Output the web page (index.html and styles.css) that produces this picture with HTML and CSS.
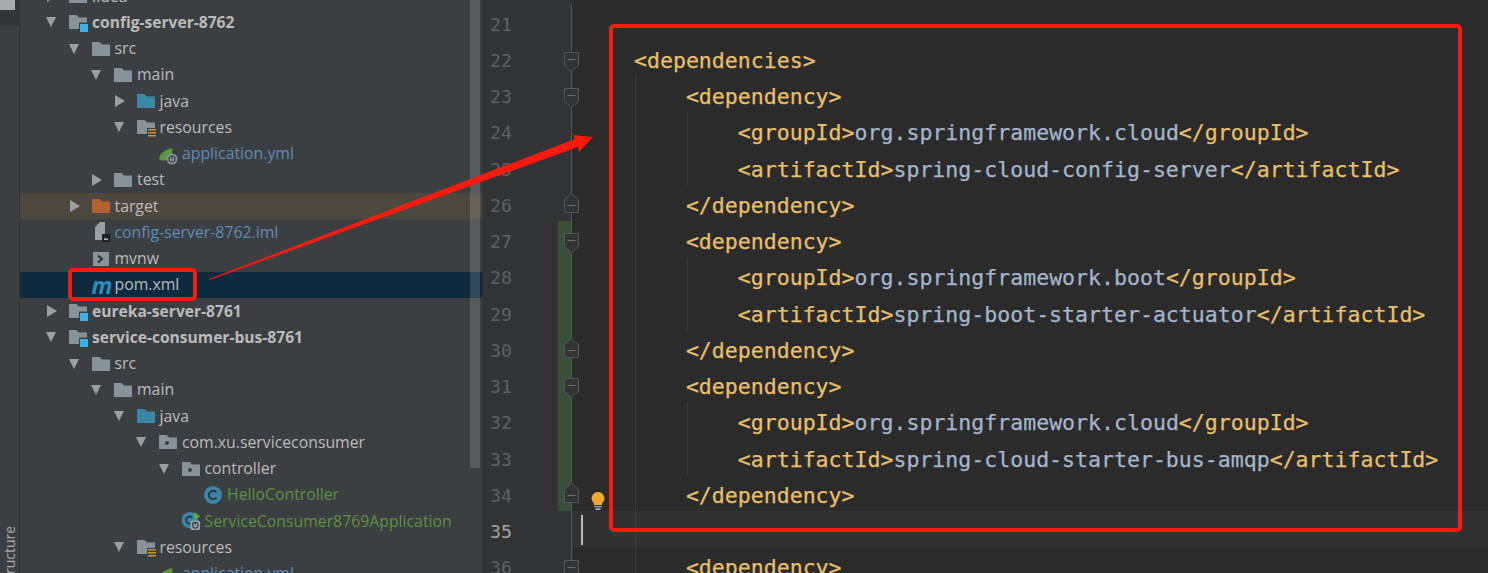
FILE: index.html
```html
<!DOCTYPE html>
<html lang="en">
<head>
<meta charset="utf-8">
<title>pom.xml</title>
<link rel="stylesheet" href="styles.css">
</head>
<body>
<svg class="defs" width="0" height="0" aria-hidden="true">
  <defs>
    <symbol id="folder" viewBox="0 0 18 14"><path d="M0 0h7.5l2.5 2.5h8V14H0z" fill="currentColor"/></symbol>
    <symbol id="module" viewBox="0 0 19 18"><path d="M0 0h7.5l2.5 2.5h8V14H0z" fill="#87939a"/><path d="M10 7.5h9V18h-9z" fill="#3c3f41"/><rect x="11" y="9" width="8" height="8" fill="#3bb0e4"/></symbol>
    <symbol id="res" viewBox="0 0 19 18"><path d="M0 0h7.5l2.5 2.5h8V14H0z" fill="#87939a"/><path d="M10 8h9v10h-9z" fill="#3c3f41"/><path d="M11 9h8v1.6h-8zM11 12h8v1.6h-8zM11 15h8v1.6h-8z" fill="#c9933c"/></symbol>
    <symbol id="pkg" viewBox="0 0 18 14"><path d="M0 0h7.5l2.5 2.5h8V14H0z" fill="#87939a"/><circle cx="8" cy="8" r="2" fill="#3c3f41"/></symbol>
    <symbol id="spring" viewBox="0 0 19 18"><path d="M0 12C1 5 7 3 13 1c1 4 0 8-3 11-4 2-8 2-10 0z" fill="#5b9a3c"/><circle cx="13" cy="12" r="5.5" fill="#87939a"/><circle cx="13" cy="12" r="3" fill="none" stroke="#3c3f41" stroke-width="1.2"/><path d="M13 9.5v2.5" stroke="#3c3f41" stroke-width="1.2"/></symbol>
    <symbol id="iml" viewBox="0 0 19 20"><path d="M3 5l5-5h5v18H3z" fill="#9aa1a6"/><rect x="10" y="12" width="8" height="8" fill="#1d1f20"/><rect x="12" y="16.5" width="4" height="1.4" fill="#c8c8c8"/></symbol>
    <symbol id="term" viewBox="0 0 16 14"><rect width="16" height="14" fill="#87939a"/><path d="M5 3.5L9 7l-4 3.5" fill="none" stroke="#2f3234" stroke-width="2"/></symbol>
    <symbol id="cls" viewBox="0 0 18 18"><circle cx="9" cy="9" r="9" fill="#3d86a8"/><path d="M12.5 6.5A4.2 4.2 0 1 0 12.5 11.5" fill="none" stroke="#2b3a42" stroke-width="2"/></symbol>
    <symbol id="app" viewBox="0 0 20 19"><circle cx="8" cy="8.500" r="8.500" fill="#3d86a8"/><path d="M11 6A3.800 3.800 0 1 0 11 11" fill="none" stroke="#2b3a42" stroke-width="2"/><path d="M13 0l6 4.500-6 4.500z" fill="#5fae3a"/><rect x="9" y="9" width="10" height="10" rx="2" fill="#9aa5ad"/><circle cx="14" cy="14" r="3" fill="none" stroke="#3c3f41" stroke-width="1.200"/><path d="M14 11.500V14" stroke="#3c3f41" stroke-width="1.200"/></symbol>
    <symbol id="fold-down" viewBox="0 0 15 20"><path d="M.5.500h14v13l-7 6-7-6z" fill="#313335" stroke="#55585a"/><path d="M3.500 7.500h8" stroke="#6a6d70"/></symbol>
    <symbol id="fold-up" viewBox="0 0 15 20"><path d="M.5 19.500h14v-13l-7-6-7 6z" fill="#313335" stroke="#55585a"/><path d="M3.500 12.500h8" stroke="#6a6d70"/></symbol>
    <symbol id="bulb" viewBox="0 0 14 18"><path d="M7 0a6.500 6.500 0 0 1 4 11.500V13H3v-1.500A6.500 6.500 0 0 1 7 0z" fill="#f0a732"/><path d="M3 14h8v1.300H3zM4.500 16.300h5V18h-5z" fill="#a8a8a8"/></symbol>
  </defs>
</svg>

<main class="app">
  <aside class="stripe">
    <div class="stripe-btn"><span class="stripe-file"></span></div>
    <span class="stripe-label">7: Structure</span>
  </aside>

  <section class="tree">
    <div class="tree-rows">
      <div class="row d1"><i class="tw closed"></i><svg class="ic gray"><use href="#folder"/></svg><span>.idea</span></div>
      <div class="row d1 bold"><i class="tw open"></i><svg class="ic low"><use href="#module"/></svg><span>config-server-8762</span></div>
      <div class="row d2"><i class="tw open"></i><svg class="ic gray"><use href="#folder"/></svg><span>src</span></div>
      <div class="row d3"><i class="tw open"></i><svg class="ic gray"><use href="#folder"/></svg><span>main</span></div>
      <div class="row d4"><i class="tw closed"></i><svg class="ic blue"><use href="#folder"/></svg><span>java</span></div>
      <div class="row d4"><i class="tw open"></i><svg class="ic low"><use href="#res"/></svg><span>resources</span></div>
      <div class="row d5 t-blue"><i class="tw"></i><svg class="ic low"><use href="#spring"/></svg><span>application.yml</span></div>
      <div class="row d3"><i class="tw closed"></i><svg class="ic gray"><use href="#folder"/></svg><span>test</span></div>
      <div class="row d2 excluded"><i class="tw closed"></i><svg class="ic orange"><use href="#folder"/></svg><span>target</span></div>
      <div class="row d2 t-blue"><i class="tw"></i><svg class="ic tall"><use href="#iml"/></svg><span>config-server-8762.iml</span></div>
      <div class="row d2"><i class="tw"></i><svg class="ic"><use href="#term"/></svg><span>mvnw</span></div>
      <div class="row d2 selected"><i class="tw"></i><span class="mvn">m</span><span>pom.xml</span></div>
      <div class="row d1 bold"><i class="tw closed"></i><svg class="ic low"><use href="#module"/></svg><span>eureka-server-8761</span></div>
      <div class="row d1 bold"><i class="tw open"></i><svg class="ic low"><use href="#module"/></svg><span>service-consumer-bus-8761</span></div>
      <div class="row d2"><i class="tw open"></i><svg class="ic gray"><use href="#folder"/></svg><span>src</span></div>
      <div class="row d3"><i class="tw open"></i><svg class="ic gray"><use href="#folder"/></svg><span>main</span></div>
      <div class="row d4"><i class="tw open"></i><svg class="ic blue"><use href="#folder"/></svg><span>java</span></div>
      <div class="row d5"><i class="tw open"></i><svg class="ic"><use href="#pkg"/></svg><span>com.xu.serviceconsumer</span></div>
      <div class="row d6"><i class="tw open"></i><svg class="ic"><use href="#pkg"/></svg><span>controller</span></div>
      <div class="row d7 t-green"><i class="tw"></i><svg class="ic big"><use href="#cls"/></svg><span>HelloController</span></div>
      <div class="row d6 t-green"><i class="tw"></i><svg class="ic tall"><use href="#app"/></svg><span>ServiceConsumer8769Application</span></div>
      <div class="row d4"><i class="tw open"></i><svg class="ic low"><use href="#res"/></svg><span>resources</span></div>
      <div class="row d5 t-blue"><i class="tw"></i><svg class="ic low"><use href="#spring"/></svg><span>application.yml</span></div>
    </div>
    <div class="scrollbar"></div>
  </section>

  <section class="gutter">
    <div class="gl"><span class="num">21</span><span class="chg"></span></div>
    <div class="gl"><span class="num">22</span><span class="chg"></span><svg class="fold"><use href="#fold-down"/></svg></div>
    <div class="gl"><span class="num">23</span><span class="chg"></span><svg class="fold"><use href="#fold-down"/></svg></div>
    <div class="gl"><span class="num">24</span><span class="chg"></span></div>
    <div class="gl"><span class="num">25</span><span class="chg"></span></div>
    <div class="gl"><span class="num">26</span><span class="chg"></span><svg class="fold up"><use href="#fold-up"/></svg></div>
    <div class="gl changed"><span class="num">27</span><span class="chg"></span><svg class="fold"><use href="#fold-down"/></svg></div>
    <div class="gl changed"><span class="num">28</span><span class="chg"></span></div>
    <div class="gl changed"><span class="num">29</span><span class="chg"></span></div>
    <div class="gl changed"><span class="num">30</span><span class="chg"></span><svg class="fold up"><use href="#fold-up"/></svg></div>
    <div class="gl changed"><span class="num">31</span><span class="chg"></span><svg class="fold"><use href="#fold-down"/></svg></div>
    <div class="gl changed"><span class="num">32</span><span class="chg"></span></div>
    <div class="gl changed"><span class="num">33</span><span class="chg"></span></div>
    <div class="gl changed"><span class="num">34</span><span class="chg"></span><svg class="fold up"><use href="#fold-up"/></svg></div>
    <div class="gl current"><span class="num">35</span><span class="chg"></span></div>
    <div class="gl"><span class="num">36</span><span class="chg"></span><svg class="fold flat"><use href="#fold-down"/></svg></div>
  </section>

  <section class="editor">
<div class="ln"></div>
<div class="ln"><b>&lt;dependencies&gt;</b></div>
<div class="ln g1">    <b>&lt;dependency&gt;</b></div>
<div class="ln g2">        <b>&lt;groupId&gt;</b>org.springframework.cloud<b>&lt;/groupId&gt;</b></div>
<div class="ln g2">        <b>&lt;artifactId&gt;</b>spring-cloud-config-server<b>&lt;/artifactId&gt;</b></div>
<div class="ln g1">    <b>&lt;/dependency&gt;</b></div>
<div class="ln g1">    <b>&lt;dependency&gt;</b></div>
<div class="ln g2">        <b>&lt;groupId&gt;</b>org.springframework.boot<b>&lt;/groupId&gt;</b></div>
<div class="ln g2">        <b>&lt;artifactId&gt;</b>spring-boot-starter-actuator<b>&lt;/artifactId&gt;</b></div>
<div class="ln g1">    <b>&lt;/dependency&gt;</b></div>
<div class="ln g1">    <b>&lt;dependency&gt;</b></div>
<div class="ln g2">        <b>&lt;groupId&gt;</b>org.springframework.cloud<b>&lt;/groupId&gt;</b></div>
<div class="ln g2">        <b>&lt;artifactId&gt;</b>spring-cloud-starter-bus-amqp<b>&lt;/artifactId&gt;</b></div>
<div class="ln g1">    <b>&lt;/dependency&gt;</b><svg class="bulb"><use href="#bulb"/></svg></div>
<div class="ln g1 cur"><i class="caret"></i></div>
<div class="ln g1">    <b>&lt;dependency&gt;</b></div>
  </section>
</main>

<svg class="marks" viewBox="0 0 1488 573" aria-hidden="true">
  <rect class="mark-box" x="611" y="26" width="849" height="504" rx="3"/>
  <rect class="mark-box" x="70" y="270" width="125" height="29" rx="3"/>
  <polygon class="mark-arrow" points="209,279 575,139 573,135 593,137 579,152 578,147 209.500,280"/>
</svg>
</body>
</html>
```
FILE: styles.css
```css
* { box-sizing: border-box; }
html, body { margin: 0; padding: 0; height: 573px; overflow: hidden; background: #2b2b2b; }
.defs { position: absolute; }
.app { display: flex; width: 1488px; height: 573px; overflow: hidden; }

/* left tool stripe */
.stripe { flex: 0 0 20px; display: flex; flex-direction: column; background: #3c3f41; border-right: 1px solid #323232; overflow: hidden; }
.stripe-btn { flex: 0 0 25px; background: #333435; }
.stripe-file { display: block; width: 15px; height: 10px; background: #a8abad; }
.stripe-label {
  flex: 0 0 auto; margin-top: 505px; margin-left: 0; writing-mode: vertical-rl; transform: rotate(180deg);
  font: 14px "Open Sans", sans-serif; color: #a9abad; white-space: nowrap; height: 72px; text-align: left;
}

/* project tree */
.tree { position: relative; flex: 0 0 462px; background: #3c3f41; overflow: hidden; }
.tree-rows { margin-top: -17px; }
.row {
  display: flex; align-items: center; height: 26.25px; white-space: nowrap;
  font: 15.800px "Open Sans", sans-serif; color: #bbbbbb;
}
.row > span:last-child { position: relative; top: -.6px; }
.d1 { padding-left: 24px; }
.d2 { padding-left: 46.500px; }
.d3 { padding-left: 69px; }
.d4 { padding-left: 91.500px; }
.d5 { padding-left: 114px; }
.d6 { padding-left: 136.500px; }
.d7 { padding-left: 159px; }
.bold { font-weight: 700; font-size: 15.600px; }
.t-blue { color: #5f8cb8; }
.t-green { color: #5b9140; }
.excluded { background: #4d483e; }
.selected { background: #0f2a3f; }
.tw { flex: 0 0 25px; width: 25px; height: 12px; position: relative; display: block; }
.tw.open::before { content: ""; position: absolute; left: 2px; top: 1px; border: solid transparent; border-width: 10px 5.500px 0; border-top-color: #9c9fa1; }
.tw.closed::before { content: ""; position: absolute; left: 3px; top: 0; border: solid transparent; border-width: 6px 0 6px 10px; border-left-color: #9c9fa1; }
.ic { flex: 0 0 18px; width: 18px; height: 14px; margin-right: 5px; overflow: visible; }
.ic.low { height: 18px; flex-basis: 19px; width: 19px; margin-right: 4px; margin-top: 4px; }
.ic.tall { height: 20px; flex-basis: 19px; width: 19px; margin-right: 4px; }
.ic.big { height: 18px; }
.gray { color: #87939a; }
.blue { color: #3d87a6; }
.orange { color: #b5602f; }
.mvn { flex: 0 0 18px; width: 18px; margin-right: 5px; font: italic 700 23px/16px "Open Sans", sans-serif; color: #2b8cbf; text-align: center; }
.scrollbar { position: absolute; right: 2px; top: 0; width: 10px; height: 468px; background: rgba(255,255,255,.14); }

/* gutter */
.gutter { flex: 0 0 90px; background: #313335; padding-top: 3.500px; }
.gl { position: relative; display: flex; height: 36.25px; border-right: 1px solid #55585a; }
.num {
  flex: 0 0 76px; padding-left: 8px;
  font: 18.300px/42px "DejaVu Sans Mono", monospace; color: #5f6265;
}
.current .num { color: #a4a3a3; }
.chg { flex: 0 0 13px; }
.changed .chg { background: #3a4f38; }
.fold { position: absolute; right: -8px; top: 12px; width: 15px; height: 20px; }
.fold.up { top: 8px; }
.fold.flat { top: 13px; }

/* editor */
.editor {
  flex: 1 1 auto; padding-top: 3.500px; background: #2b2b2b;
  font: 21.560px/42px "DejaVu Sans Mono", monospace; color: #a3b6cd; -webkit-text-stroke: .25px currentColor;
}
.ln { position: relative; height: 36.25px; padding-left: 62px; white-space: pre; background-repeat: no-repeat; }
.ln b { font-weight: 400; color: #e8bf6a; }
.g1 { background-image: linear-gradient(#3c3c3c, #3c3c3c); background-size: 1px 100%; background-position: 63px 0; }
.g2 { background-image: linear-gradient(#3c3c3c, #3c3c3c), linear-gradient(#3c3c3c, #3c3c3c); background-size: 1px 100%, 1px 100%; background-position: 63px 0, 115px 0; }
.cur { background-color: #323232; }
.caret { position: absolute; left: 9px; top: 4px; width: 2px; height: 30px; background: #bbbbbb; }
.bulb { position: absolute; left: 19px; top: 17px; width: 14px; height: 18px; }

/* annotations drawn over the screenshot */
.marks { position: absolute; left: 0; top: 0; width: 1488px; height: 573px; pointer-events: none; }
.mark-box { fill: none; stroke: #fb1a0e; stroke-width: 4; }
.mark-arrow { fill: #fb1a0e; }
```
